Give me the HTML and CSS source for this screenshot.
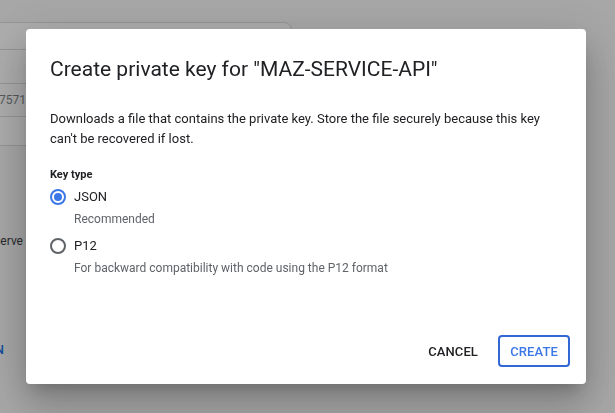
FILE: index.html
```html
<!DOCTYPE html>
<html>
<head>
<meta charset="utf-8">
<link rel="stylesheet" href="styles.css">
</head>
<body>
<div class="page">
  <div class="card">
    <div class="row row-a"></div>
    <div class="row row-b"></div>
    <div class="row row-c"><div class="clip"><span class="muted">maz-service-api-3047571</span></div></div>
    <div class="row row-d"></div>
  </div>
  <div class="note"><div class="clip"><span>Keys that you serve</span></div></div>
  <div class="action"><div class="clip clip-n"><span>ADD KEY N</span></div></div>
</div>

<div class="overlay">
  <div class="dialog" role="dialog">
    <h1 class="title">Create private key for "MAZ-SERVICE-API"</h1>
    <p class="body-text">Downloads a file that contains the private key. Store the file securely because this key can't be recovered if lost.</p>
    <div class="field-label">Key type</div>
    <div class="option">
      <span class="radio radio-on"></span>
      <span class="option-label">JSON</span>
    </div>
    <div class="option-hint">Recommended</div>
    <div class="option option-second">
      <span class="radio"></span>
      <span class="option-label">P12</span>
    </div>
    <div class="option-hint">For backward compatibility with code using the P12 format</div>
    <div class="actions">
      <button class="btn btn-text">CANCEL</button>
      <button class="btn btn-primary">CREATE</button>
    </div>
  </div>
</div>
</body>
</html>
```

FILE: styles.css
```css
html, body {
  margin: 0;
  padding: 0;
}
body {
  width: 615px;
  height: 413px;
  overflow: hidden;
  background: #f7f7f7;
  font-family: Roboto, "Liberation Sans", sans-serif;
  color: #202124;
}
.page {
  padding-top: 22px;
}
.card {
  width: 300px;
  margin-left: -10px;
  border: 1px solid #dadce0;
  border-radius: 8px;
  background: #ffffff;
}
.row {
  border-bottom: 1px solid #dadce0;
  display: flex;
  align-items: center;
  padding-left: 9px;
}
.row-a { height: 26px; }
.row-b { height: 33px; }
.row-c { height: 32px; }
.row-d { height: 28px; border-bottom: none; }
.clip {
  width: 26px;
  overflow: hidden;
  display: flex;
  justify-content: flex-end;
  white-space: nowrap;
  font-size: 12px;
}
.muted { color: #80868b; }
.note {
  margin-top: 88px;
  color: #3c4043;
}
.note .clip { width: 23px; font-size: 12px; }
.action {
  margin-top: 94px;
  color: #1a73e8;
  font-weight: 500;
}
.clip-n { width: 4px; font-size: 13px; }

.overlay {
  position: fixed;
  inset: 0;
  background: rgba(0, 0, 0, 0.32);
  display: flex;
  align-items: center;
  justify-content: center;
}
.dialog {
  width: 560px;
  height: 355px;
  box-sizing: border-box;
  background: #ffffff;
  border-radius: 4px;
  padding: 24px 24px 0 24px;
  box-shadow: 0 11px 15px -7px rgba(0,0,0,.2), 0 24px 38px 3px rgba(0,0,0,.14), 0 9px 46px 8px rgba(0,0,0,.12);
  display: flex;
  flex-direction: column;
  margin-left: -3px;
}
.title {
  margin: 0 0 24px 0;
  font-size: 21px;
  line-height: 32px;
  font-weight: 400;
  color: #202124;
}
.body-text {
  margin: 0;
  font-size: 13px;
  line-height: 20px;
  color: #202124;
}
.field-label {
  margin-top: 18px;
  font-size: 11px;
  line-height: 16px;
  font-weight: 700;
  color: #202124;
}
.option {
  margin-top: 4px;
  display: flex;
  align-items: center;
  height: 20px;
}
.option-second { margin-top: 9px; }
.radio {
  width: 16px;
  height: 16px;
  box-sizing: border-box;
  border: 2px solid #5f6368;
  border-radius: 50%;
  margin-right: 8px;
  display: flex;
  align-items: center;
  justify-content: center;
}
.radio-on { border-color: #3b78e7; }
.radio-on::after {
  content: "";
  width: 8px;
  height: 8px;
  border-radius: 50%;
  background: #3b78e7;
}
.option-label {
  font-size: 13px;
  line-height: 20px;
  color: #202124;
}
.option-hint {
  margin-top: 4px;
  margin-left: 24px;
  font-size: 12px;
  line-height: 16px;
  color: #5f6368;
}
.actions {
  margin-top: auto;
  margin-right: -8px;
  padding-bottom: 17px;
  display: flex;
  justify-content: flex-end;
  align-items: center;
  gap: 12px;
}
.btn {
  font-family: Roboto, "Liberation Sans", sans-serif;
  font-size: 13px;
  font-weight: 500;
  letter-spacing: 0.1px;
  height: 32px;
  border-radius: 4px;
  background: #ffffff;
  cursor: pointer;
}
.btn-text {
  border: none;
  padding: 0 8px;
  color: #202124;
}
.btn-primary {
  border: 2px solid #3367d6;
  padding: 0;
  color: #3b78e7;
  width: 72px;
}
```
